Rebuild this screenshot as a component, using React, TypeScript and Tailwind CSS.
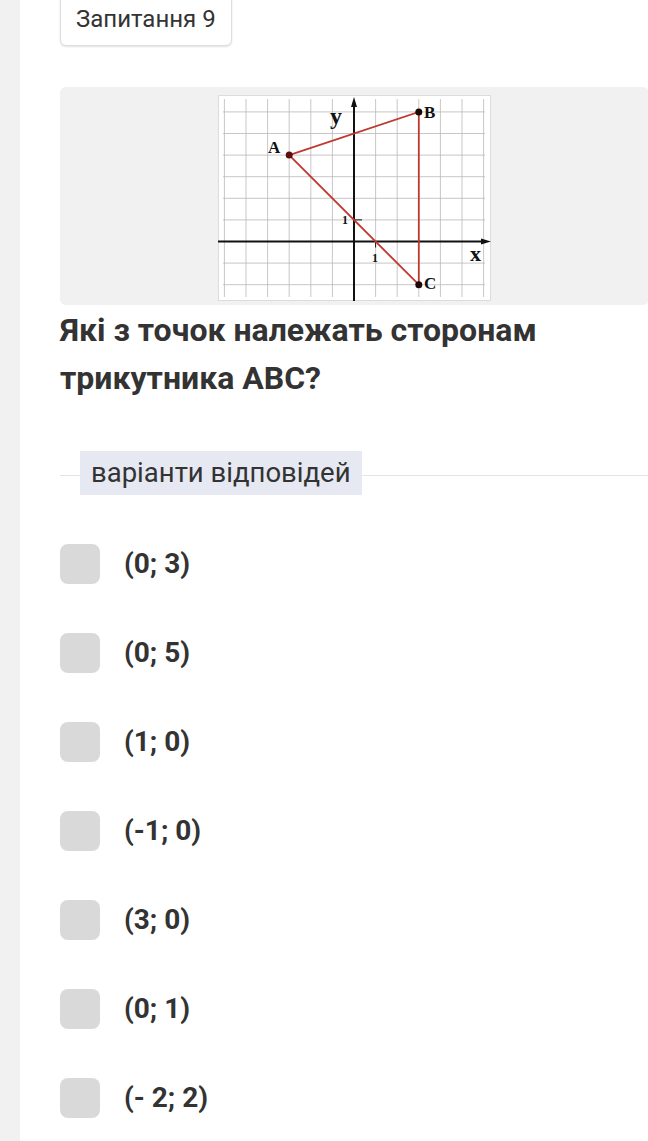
const U = 21.6;
const OX = 136;
const OY = 146.5;

const px = (x: number) => OX + x * U;
const py = (y: number) => OY - y * U;

function Graph() {
  const vlines = [-6, -5, -4, -3, -2, -1, 1, 2, 3, 4, 5, 6];
  const hlines = [-2, -1, 1, 2, 3, 4, 5, 6];
  const A = [px(-3), py(4)];
  const B = [px(3), py(6)];
  const C = [px(3), py(-2)];
  return (
    <svg width="273" height="206" viewBox="0 0 273 206" className="block">
      <rect x="0.5" y="0.5" width="272" height="205" fill="#fff" stroke="#dcdcdc" />
      {vlines.map((k) => (
        <line key={'v' + k} x1={px(k)} y1="4" x2={px(k)} y2="202" stroke="#b9b9b9" strokeWidth="0.8" />
      ))}
      {hlines.map((k) => (
        <line key={'h' + k} x1="5" y1={py(k)} x2="267" y2={py(k)} stroke="#b9b9b9" strokeWidth="0.8" />
      ))}
      {/* axes */}
      <line x1={OX} y1="6" x2={OX} y2="206" stroke="#111" strokeWidth="2" />
      <line x1="0" y1={OY} x2="268" y2={OY} stroke="#111" strokeWidth="2" />
      <polygon points={`${OX},2 ${OX - 3},12 ${OX + 3},12`} fill="#111" />
      <polygon points={`273,${OY} 263,${OY - 3} 263,${OY + 3}`} fill="#111" />
      {/* unit ticks */}
      <line x1={OX} y1={py(1)} x2={OX + 8} y2={py(1)} stroke="#111" strokeWidth="1" />
      <line x1={px(1)} y1={OY} x2={px(1)} y2={OY + 6} stroke="#111" strokeWidth="1" />
      {/* triangle */}
      <polygon
        points={`${A[0]},${A[1]} ${B[0]},${B[1]} ${C[0]},${C[1]}`}
        fill="none"
        stroke="#c0392f"
        strokeWidth="1.8"
      />
      <circle cx={A[0]} cy={A[1]} r="3.5" fill="#5a0f0f" />
      <circle cx={B[0]} cy={B[1]} r="3.5" fill="#1a0808" />
      <circle cx={C[0]} cy={C[1]} r="3.5" fill="#1a0808" />
      <g fontFamily="'Liberation Serif', serif" fontWeight="bold" fill="#111">
        <text x="50" y="58" fontSize="17">A</text>
        <text x="206" y="23" fontSize="17">B</text>
        <text x="206" y="194" fontSize="17">C</text>
        <text x="112" y="29" fontSize="24">y</text>
        <text x="252" y="166" fontSize="22">x</text>
        <text x="124" y="129" fontSize="12">1</text>
        <text x="154" y="167" fontSize="12">1</text>
      </g>
    </svg>
  );
}

const options = ['(0; 3)', '(0; 5)', '(1; 0)', '(-1; 0)', '(3; 0)', '(0; 1)', '(- 2; 2)'];

export default function App() {
  return (
    <div
      className="flex min-h-[1141px] w-[648px] overflow-hidden bg-white text-[#333]"
      style={{ fontFamily: 'Roboto, "Noto Sans", sans-serif' }}
    >
      <div className="w-5 shrink-0 bg-[#f1f1f1]" />
      <div className="flex w-[629px] shrink-0 flex-col pl-10">
        <div className="-mt-3 self-start rounded-md border border-[#dedede] bg-white px-[15px] pt-[13px] pb-[9px] text-[24px] leading-[34px] text-[#333] shadow-[0_1px_2px_rgba(0,0,0,0.12)]">
          Запитання 9
        </div>

        <div className="mt-[41px] flex justify-center rounded-md bg-[#f1f1f1] pt-2 pb-1">
          <Graph />
        </div>

        <h2 className="mt-px text-[32px] font-bold leading-[48px] text-[#333]">
          Які з точок належать сторонам
          <br />
          трикутника АВС?
        </h2>

        <div className="relative mt-[49px] flex items-center">
          <div className="absolute inset-x-0 top-[24px] h-px bg-[#e4e4e4]" />
          <div className="relative ml-5 bg-[#e7e9f2] px-[11px] text-[27.5px] leading-[44px] text-[#333]">
            варіанти відповідей
          </div>
        </div>

        <div className="mt-[49px] flex flex-col gap-[49px]">
          {options.map((o) => (
            <div key={o} className="flex items-center gap-6">
              <div className="h-10 w-10 rounded-lg bg-[#d9d9d9]" />
              <span className="text-[28px] font-bold leading-10 text-[#333]">{o}</span>
            </div>
          ))}
        </div>
      </div>
    </div>
  );
}
